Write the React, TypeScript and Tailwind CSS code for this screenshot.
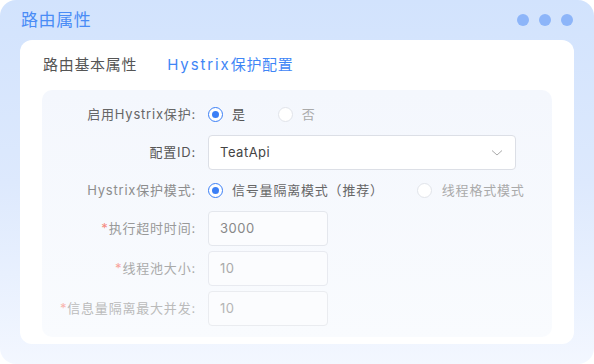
import React from "react";

const font = { fontFamily: '"Inter", "Noto Sans CJK SC", sans-serif' };

function Radio({ checked }: { checked?: boolean }) {
  if (checked) {
    return (
      <span className="flex h-[15px] w-[15px] shrink-0 items-center justify-center rounded-full border-[1.5px] border-[#3b7ff6] bg-white">
        <span className="block h-[7px] w-[7px] rounded-full bg-[#3b7ff6]" />
      </span>
    );
  }
  return <span className="block h-[15px] w-[15px] shrink-0 rounded-full border border-[#e1e4ea] bg-white" />;
}

function Label({ text, req, color, starColor }: { text: string; req?: boolean; color: string; starColor?: string }) {
  return (
    <div className="w-[154px] shrink-0 text-right text-[13px] tracking-[0.8px]" style={{ color }}>
      {req && <span style={{ color: starColor }}>*</span>}
      {text}:
    </div>
  );
}

export default function App() {
  return (
    <div className="h-[364px] w-[594px] bg-white" style={font}>
      <div className="flex h-[364px] w-[594px] flex-col rounded-[16px] bg-gradient-to-b from-[#d2e3fd] via-[#dde9fd] to-[#f3f7ff]">
        <div className="flex h-[40px] items-center justify-between pl-[21px] pr-[21px]">
          <div className="text-[17px] leading-none tracking-[0.6px] text-[#4a8cf6]">路由属性</div>
          <div className="flex gap-[10px]">
            <span className="block h-[12px] w-[12px] rounded-full bg-[#8db5f9]" />
            <span className="block h-[12px] w-[12px] rounded-full bg-[#8db5f9]" />
            <span className="block h-[12px] w-[12px] rounded-full bg-[#8db5f9]" />
          </div>
        </div>
        <div className="mx-[20px] flex h-[304px] flex-col rounded-[12px] bg-white px-[22px]">
          <div className="flex h-[50px] items-center gap-[30px] pl-[1px] text-[15px] tracking-[0.7px]">
            <span className="text-[#555]">路由基本属性</span>
            <span className="text-[#3f86f6]">
              <span className="tracking-[1.9px]">Hystrix</span>保护配置
            </span>
          </div>
          <div className="flex h-[247px] flex-col rounded-[10px] bg-gradient-to-b from-[#f4f7fd] to-[#f9fbfe] pt-[8px]">
            <div className="flex h-[33px] items-center gap-[12px]">
              <Label text="启用Hystrix保护" color="#666" />
              <div className="flex items-center text-[13px] tracking-[0.8px]">
                <Radio checked />
                <span className="ml-[9px] text-[#555]">是</span>
                <span className="ml-[32px]">
                  <Radio />
                </span>
                <span className="ml-[9px] text-[#aaa]">否</span>
              </div>
            </div>
            <div className="mt-[4px] flex h-[35px] items-center gap-[12px]">
              <Label text="配置ID" color="#555" />
              <div className="flex h-[35px] w-[308px] items-center justify-between rounded-[4px] border border-[#dcdfe6] bg-white pl-[11px] pr-[12px] text-[13px] tracking-[0.5px] text-[#444]">
                <span>TeatApi</span>
                <svg width="12" height="8" viewBox="0 0 12 8" fill="none">
                  <path d="M1 1.5L6 6L11 1.5" stroke="#aaa" strokeWidth="1" />
                </svg>
              </div>
            </div>
            <div className="mt-[4px] flex h-[33px] items-center gap-[12px]">
              <Label text="Hystrix保护模式" color="#8d8d8d" />
              <div className="flex items-center text-[13px] tracking-[0.8px]">
                <Radio checked />
                <span className="ml-[9px] text-[#666]">信号量隔离模式（推荐）</span>
                <span className="ml-[33px]">
                  <Radio />
                </span>
                <span className="ml-[10px] text-[#aaa]">线程格式模式</span>
              </div>
            </div>
            <div className="mt-[4px] flex h-[35px] items-center gap-[12px]">
              <Label text="执行超时时间" req color="#999" starColor="#f58a80" />
              <div className="flex h-[35px] w-[120px] items-center rounded-[4px] border border-[#e4e7ed] bg-[#fbfcfe] pl-[11px] text-[13px] tracking-[0.5px] text-[#888]">
                3000
              </div>
            </div>
            <div className="mt-[5px] flex h-[35px] items-center gap-[12px]">
              <Label text="线程池大小" req color="#aaa" starColor="#f8a39b" />
              <div className="flex h-[35px] w-[120px] items-center rounded-[4px] border border-[#e8eaf0] bg-[#fbfcfe] pl-[11px] text-[13px] tracking-[0.5px] text-[#aaa]">
                10
              </div>
            </div>
            <div className="mt-[5px] flex h-[35px] items-center gap-[12px]">
              <Label text="信息量隔离最大并发" req color="#bbb" starColor="#f9b5ae" />
              <div className="flex h-[35px] w-[120px] items-center rounded-[4px] border border-[#eaecf0] bg-[#fbfcfe] pl-[11px] text-[13px] tracking-[0.5px] text-[#b5b5b5]">
                10
              </div>
            </div>
          </div>
        </div>
      </div>
    </div>
  );
}
